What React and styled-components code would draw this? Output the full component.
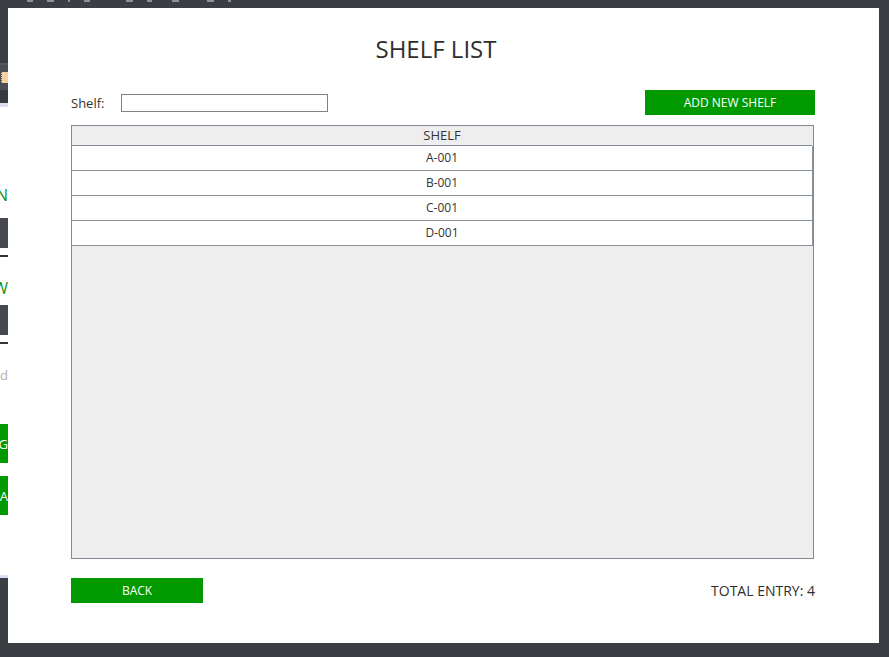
import React from 'react';
import styled, { createGlobalStyle } from 'styled-components';

const GlobalStyle = createGlobalStyle`
  html, body {
    margin: 0;
    padding: 0;
    background: #3b3e42;
  }
  body {
    font-family: "Open Sans", "Liberation Sans", sans-serif;
  }
`;

const Desktop = styled.div`
  position: relative;
  width: 889px;
  height: 657px;
  overflow: hidden;
  background: #3b3e42;
`;

const TopStrip = styled.div`
  display: flex;
  gap: 14px;
  padding-left: 2px;
  height: 2px;
`;

const StripMark = styled.span`
  width: ${p => p.w}px;
  height: 2px;
  margin-left: ${p => p.skip || 0}px;
  background: #8e9196;
`;

/* window lying behind the dialog, only its right edge shows */
const BackWindow = styled.div`
  position: absolute;
  left: 0;
  top: 0;
  width: 8px;
  height: 578px;
  display: flex;
  flex-direction: column;
  overflow: hidden;
`;

const BackTitle = styled.div`
  height: 63px;
  background: #3b3e42;
  border-bottom: 2px solid #55585c;
`;

const BackToolbar = styled.div`
  height: 25px;
  background: #4b4e52;
  display: flex;
  align-items: center;
  justify-content: flex-end;
`;

const ToolIcon = styled.span`
  width: 6px;
  height: 11px;
  background: #f3cfa3;
  border-left: 1px dotted #6a4a2a;
`;

const BackGap = styled.div`
  height: 13px;
  background: #383b3f;
`;

const Lavender = styled.div`
  height: ${p => p.h}px;
  background: #dcdcf4;
`;

const BackBody = styled.div`
  flex: 1;
  background: #ffffff;
  display: flex;
  flex-direction: column;
`;

const BackRow = styled.div`
  height: ${p => p.h}px;
  margin-top: ${p => p.top || 0}px;
  display: flex;
  align-items: center;
  justify-content: flex-end;
  white-space: nowrap;
  font-size: ${p => p.size || 16}px;
  color: ${p => p.color || '#178f17'};
  background: ${p => p.bg || 'transparent'};
`;

const Dialog = styled.div`
  position: absolute;
  left: 8px;
  top: 8px;
  width: 871px;
  height: 635px;
  box-sizing: border-box;
  padding: 0 64px 0 63px;
  background: #ffffff;
  display: flex;
  flex-direction: column;
  color: #333333;
`;

const Title = styled.h1`
  margin: 24px 0 0;
  padding-right: 14px;
  height: 34px;
  line-height: 34px;
  text-align: center;
  font-size: 24px;
  font-weight: 400;
  color: #2e2e2e;
`;

const Toolbar = styled.div`
  margin-top: 24px;
  height: 25px;
  display: flex;
  align-items: center;
`;

const Label = styled.label`
  font-size: 13px;
  width: 50px;
`;

const TextInput = styled.input`
  box-sizing: border-box;
  width: 207px;
  height: 18px;
  border: 1px solid #7d8288;
  padding: 0 3px;
  font: inherit;
  font-size: 12px;
  outline: none;
`;

const Spacer = styled.div`
  flex: 1;
`;

const GreenButton = styled.button`
  width: ${p => p.w}px;
  height: 25px;
  border: none;
  padding: 0;
  background: #009900;
  color: #ffffff;
  font-family: "Open Sans", "Liberation Sans", sans-serif;
  font-size: 12px;
  cursor: pointer;
`;

const Table = styled.div`
  margin-top: 10px;
  margin-right: 1px;
  height: 434px;
  box-sizing: border-box;
  border: 1px solid #7f8a95;
  background: #eeeeee;
  display: flex;
  flex-direction: column;
`;

const HeaderCell = styled.div`
  height: 19px;
  line-height: 19px;
  border-bottom: 1px solid #7f8a95;
  text-align: center;
  font-size: 13px;
  color: #333;
  margin-right: 1px;
`;

const Row = styled.div`
  height: 24px;
  line-height: 24px;
  background: #ffffff;
  border-bottom: 1px solid #8a9099;
  border-right: 1px solid #8a9099;
  text-align: center;
  font-size: 12px;
  color: #333;
`;

const Footer = styled.div`
  margin-top: 19px;
  height: 25px;
  display: flex;
  align-items: center;
  justify-content: space-between;
`;

const Total = styled.span`
  font-size: 14px;
  color: #2e2e2e;
`;

const shelves = ['A-001', 'B-001', 'C-001', 'D-001'];

const marks = [
  [5, 0], [6, 6], [7, 0], [2, 0], [6, 0], [7, 22], [5, 0], [7, 6], [7, 14], [3, 0]
];

export default function App() {
  return (
    <>
      <GlobalStyle />
      <Desktop>
        <TopStrip>
          {marks.map(([w, skip], i) => (
            <StripMark key={i} w={w} skip={skip} />
          ))}
        </TopStrip>

        <BackWindow>
          <BackTitle />
          <BackToolbar>
            <ToolIcon />
          </BackToolbar>
          <BackGap />
          <Lavender h={4} />
          <BackBody>
            <BackRow h={22} top={77}>RETURN</BackRow>
            <BackRow h={30} top={12} bg="#45484c" />
            <BackRow h={2} top={7} bg="#333333" />
            <BackRow h={22} top={20}>VIEW</BackRow>
            <BackRow h={30} top={6} bg="#45484c" />
            <BackRow h={2} top={7} bg="#333333" />
            <BackRow h={18} top={22} size={13} color="#b0b0b0">Keyword</BackRow>
            <BackRow h={39} top={40} size={13} color="#ffffff" bg="#009900">LOG</BackRow>
            <BackRow h={39} top={13} size={13} color="#ffffff" bg="#009900">PA</BackRow>
            <Spacer />
            <Lavender h={3} />
          </BackBody>
        </BackWindow>

        <Dialog>
          <Title>SHELF LIST</Title>
          <Toolbar>
            <Label htmlFor="shelf">Shelf:</Label>
            <TextInput id="shelf" />
            <Spacer />
            <GreenButton w={170}>ADD NEW SHELF</GreenButton>
          </Toolbar>
          <Table>
            <HeaderCell>SHELF</HeaderCell>
            {shelves.map(s => (
              <Row key={s}>{s}</Row>
            ))}
          </Table>
          <Footer>
            <GreenButton w={132}>BACK</GreenButton>
            <Total>TOTAL ENTRY: {shelves.length}</Total>
          </Footer>
        </Dialog>
      </Desktop>
    </>
  );
}
